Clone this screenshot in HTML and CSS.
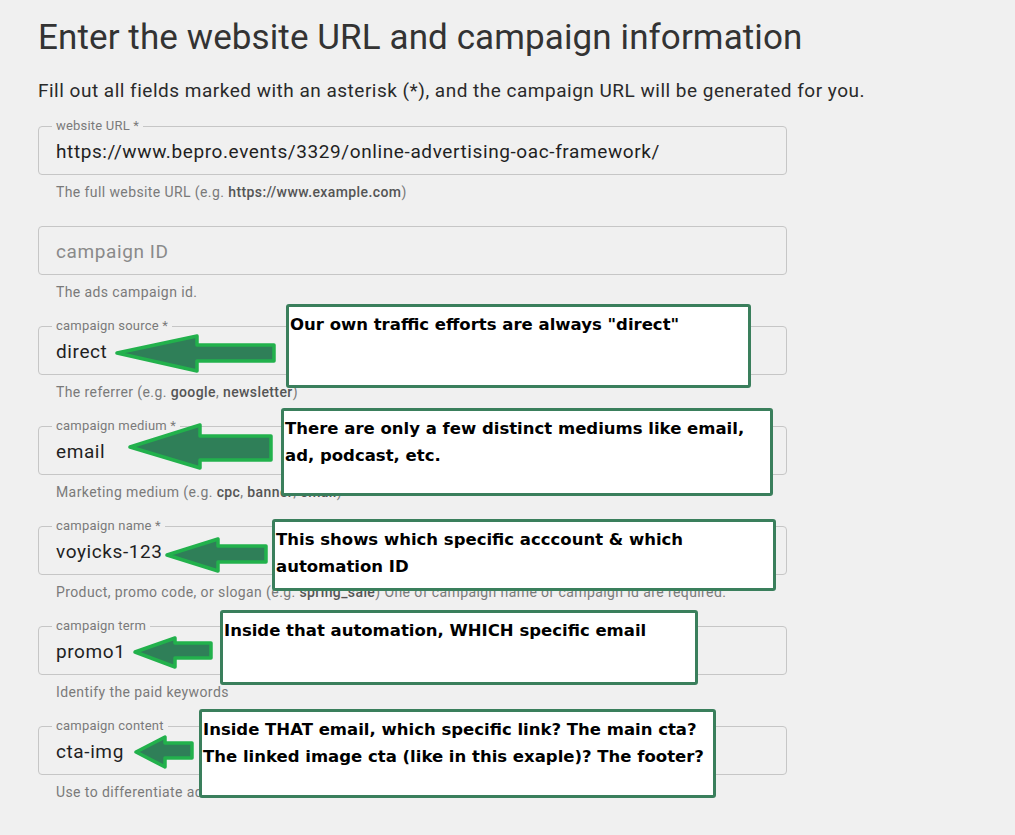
FILE: index.html
```html
<!DOCTYPE html>
<html lang="en">
<head>
<meta charset="utf-8">
<title>Campaign URL Builder</title>
<link rel="stylesheet" href="styles.css">
</head>
<body>
<main class="page">
  <h1 class="title">Enter the website URL and campaign information</h1>
  <p class="intro">Fill out all fields marked with an asterisk (*), and the campaign URL will be generated for you.</p>

  <div class="field">
    <div class="box"><span class="label">website URL *</span><span class="value">https://www.bepro.events/3329/online-advertising-oac-framework/</span></div>
    <div class="help">The full website URL (e.g. <b>https://www.example.com</b>)</div>
  </div>

  <div class="field">
    <div class="box"><span class="value placeholder">campaign ID</span></div>
    <div class="help">The ads campaign id.</div>
  </div>

  <div class="field">
    <div class="box"><span class="label">campaign source *</span><span class="value">direct</span></div>
    <div class="help">The referrer (e.g. <b>google</b>, <b>newsletter</b>)</div>
  </div>

  <div class="field">
    <div class="box"><span class="label">campaign medium *</span><span class="value">email</span></div>
    <div class="help">Marketing medium (e.g. <b>cpc</b>, <b>banner</b>, <b>email</b>)</div>
  </div>

  <div class="field">
    <div class="box"><span class="label">campaign name *</span><span class="value">voyicks-123</span></div>
    <div class="help">Product, promo code, or slogan (e.g. <b>spring_sale</b>) One of campaign name or campaign id are required.</div>
  </div>

  <div class="field">
    <div class="box"><span class="label">campaign term</span><span class="value">promo1</span></div>
    <div class="help">Identify the paid keywords</div>
  </div>

  <div class="field">
    <div class="box"><span class="label">campaign content</span><span class="value">cta-img</span></div>
    <div class="help">Use to differentiate ads</div>
  </div>
</main>

<svg class="arrows" width="1015" height="835" viewBox="0 0 1015 835" aria-hidden="true">
  <g class="arrow">
    <polygon points="117,353 197,336 197,345 274,345 274,361 197,361 197,371"/>
    <polygon points="130,447 200,425 200,436 271,436 271,460 200,460 200,468"/>
    <polygon points="167,555 218,539 218,546 266,546 266,562 218,562 218,571"/>
    <polygon points="135,652 175,638 175,643 211,643 211,658 175,658 175,667"/>
    <polygon points="136,752 165,737 165,743 192,743 192,758 165,758 165,767"/>
  </g>
</svg>

<div class="note n1">Our own traffic efforts are always "direct"</div>
<div class="note n2">There are only a few distinct mediums like email,<br>ad, podcast, etc.</div>
<div class="note n3">This shows which specific acccount &amp; which<br>automation ID</div>
<div class="note n4">Inside that automation, WHICH specific email</div>
<div class="note n5">Inside THAT email, which specific link? The main cta?<br>The linked image cta (like in this exaple)? The footer?</div>
</body>
</html>
```

FILE: styles.css
```css
html, body {
  margin: 0;
  padding: 0;
  background: #f0f0f0;
}
body {
  position: relative;
  width: 1015px;
  height: 835px;
  overflow: hidden;
  font-family: Roboto, "Liberation Sans", sans-serif;
}
.page {
  padding: 18px 0 0 38px;
}
.title {
  margin: 0;
  font-size: 35px;
  line-height: 40px;
  font-weight: 400;
  letter-spacing: 0.1px;
  color: #333333;
}
.intro {
  margin: 21px 0 23px;
  font-size: 19px;
  line-height: 24px;
  letter-spacing: 0.5px;
  color: #2a2a2a;
}
.field {
  width: 749px;
  margin-bottom: 24px;
}
.box {
  position: relative;
  box-sizing: border-box;
  height: 49px;
  border: 1px solid #c6c6c6;
  border-radius: 4px;
  padding: 0 17px;
  display: flex;
  align-items: center;
}
.label {
  position: absolute;
  top: -9px;
  left: 13px;
  padding: 0 4px;
  background: #f0f0f0;
  font-size: 13px;
  line-height: 16px;
  letter-spacing: 0.2px;
  color: #7a7a7a;
}
.value {
  font-size: 19px;
  line-height: 24px;
  letter-spacing: 0.6px;
  color: #1f1f1f;
  padding-top: 3px;
}
.placeholder {
  color: #8a8a8a;
}
.help {
  margin: 7px 0 0 18px;
  font-size: 14px;
  line-height: 20px;
  letter-spacing: 0.4px;
  color: #7a7a7a;
}
.help b {
  font-weight: 500;
  color: #555555;
}
.arrows {
  position: absolute;
  top: 0;
  left: 0;
  pointer-events: none;
}
.arrow polygon {
  fill: #2f7f58;
  stroke: #22b14c;
  stroke-width: 3.5;
  stroke-linejoin: round;
}
.note {
  position: absolute;
  box-sizing: border-box;
  background: #ffffff;
  border: 3px solid #3a7f5c;
  border-radius: 3px;
  padding: 4px 2px 4px 1px;
  font-family: "DejaVu Sans", Verdana, sans-serif;
  font-weight: 700;
  font-size: 16.5px;
  line-height: 27px;
  white-space: nowrap;
  color: #000000;
}
.n1 { left: 286px; top: 304px; width: 465px; height: 84px; }
.n2 { left: 281px; top: 408px; width: 492px; height: 88px; }
.n3 { left: 272px; top: 519px; width: 504px; height: 72px; }
.n4 { left: 220px; top: 610px; width: 478px; height: 75px; }
.n5 { left: 199px; top: 709px; width: 517px; height: 89px; }
```
